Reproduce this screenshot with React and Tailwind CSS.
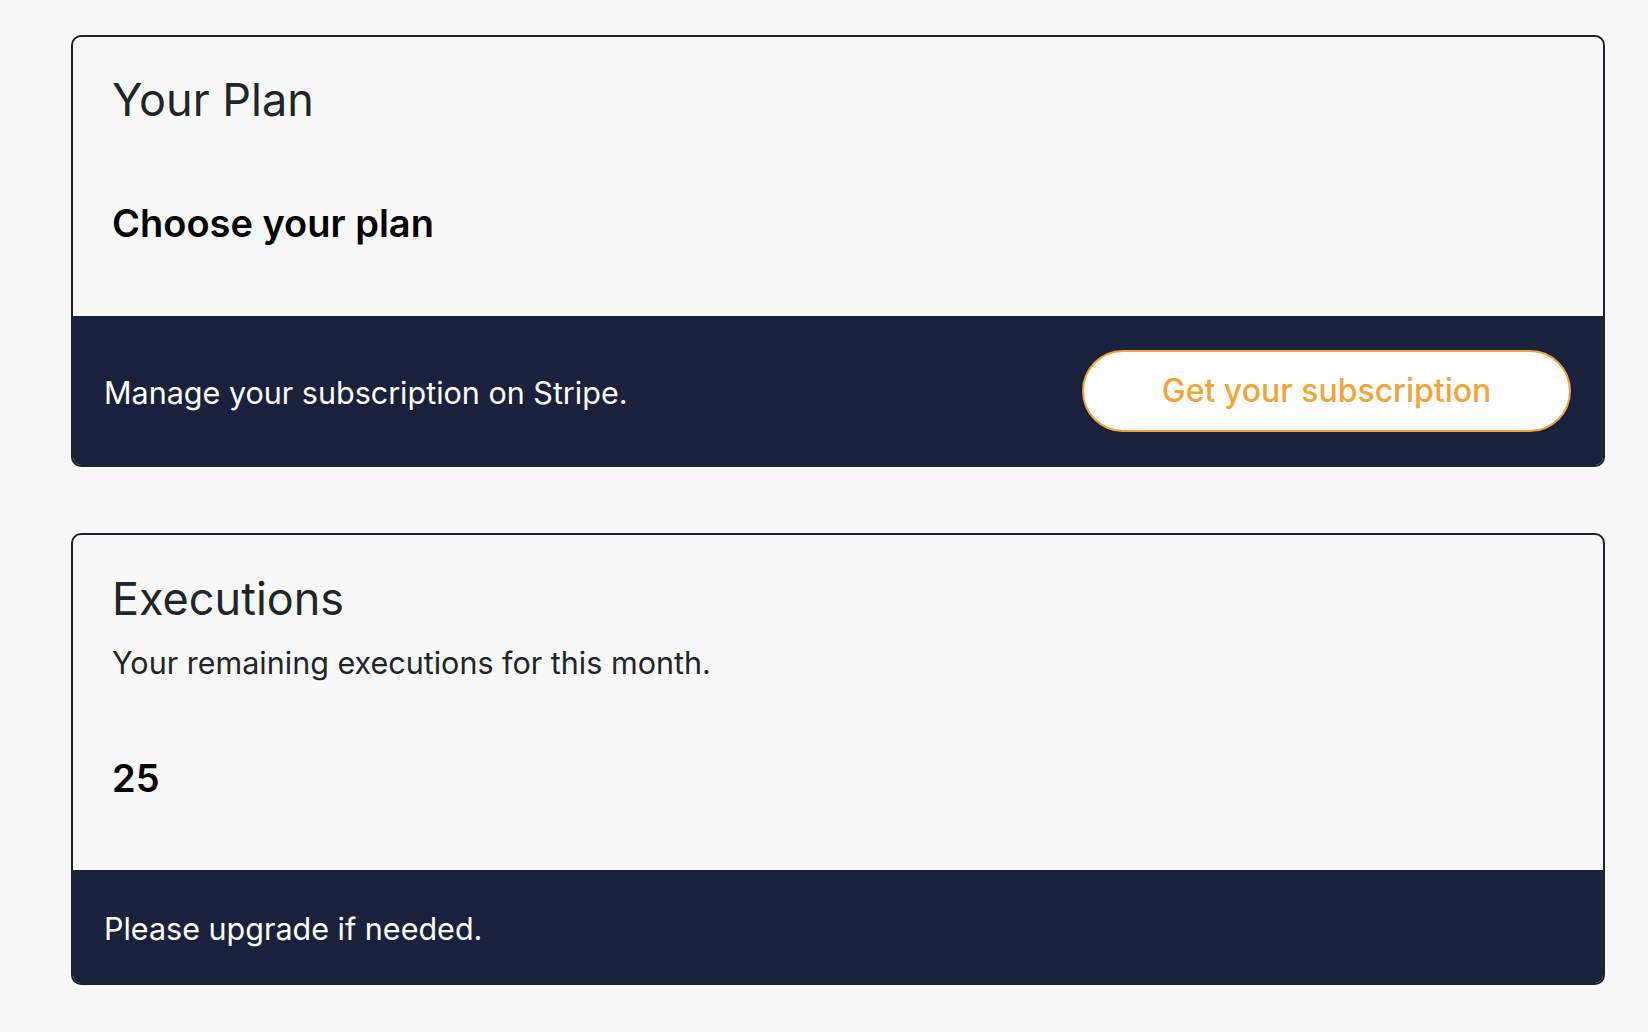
import React from 'react';

const font = { fontFamily: 'Inter, "Noto Sans", sans-serif' };

const App = () => {
    return (
        <div className="min-h-screen bg-[#f8f8f8] pl-[71px] pr-[43px] pt-[35px] pb-[47px]" style={font}>
            <div className="rounded-[10px] border-2 border-[#1e2226] overflow-hidden bg-[#f8f8f8]">
                <div className="h-[279px] px-[39px] pt-[36px]">
                    <h2 className="text-[45px] leading-[1.2] text-[#212529] font-normal">Your Plan</h2>
                    <p className="mt-[74px] text-[38px] leading-[1.2] font-semibold text-black">Choose your plan</p>
                </div>
                <div className="h-[149px] bg-[#19213d] flex items-center justify-between pl-[31px] pr-[32px]">
                    <p className="pt-[4px] text-[30.5px] text-white">Manage your subscription on Stripe.</p>
                    <button className="w-[489px] h-[82px] rounded-full bg-white border-2 border-[#f0a53c] text-[#f0a53c] text-[32px] font-medium">
                        Get your subscription
                    </button>
                </div>
            </div>

            <div className="mt-[66px] rounded-[10px] border-2 border-[#1e2226] overflow-hidden bg-[#f8f8f8]">
                <div className="h-[335px] px-[39px] pt-[37px]">
                    <h2 className="text-[45px] leading-[1.2] text-[#212529] font-normal">Executions</h2>
                    <p className="mt-[14px] text-[30.5px] leading-[1.5] text-[#212529]">Your remaining executions for this month.</p>
                    <p className="mt-[70px] text-[38px] leading-[1.2] font-semibold text-black">25</p>
                </div>
                <div className="h-[113px] bg-[#19213d] flex items-center pl-[31px]">
                    <p className="pt-[4px] text-[30.5px] text-white">Please upgrade if needed.</p>
                </div>
            </div>
        </div>
    );
};

export default App;
